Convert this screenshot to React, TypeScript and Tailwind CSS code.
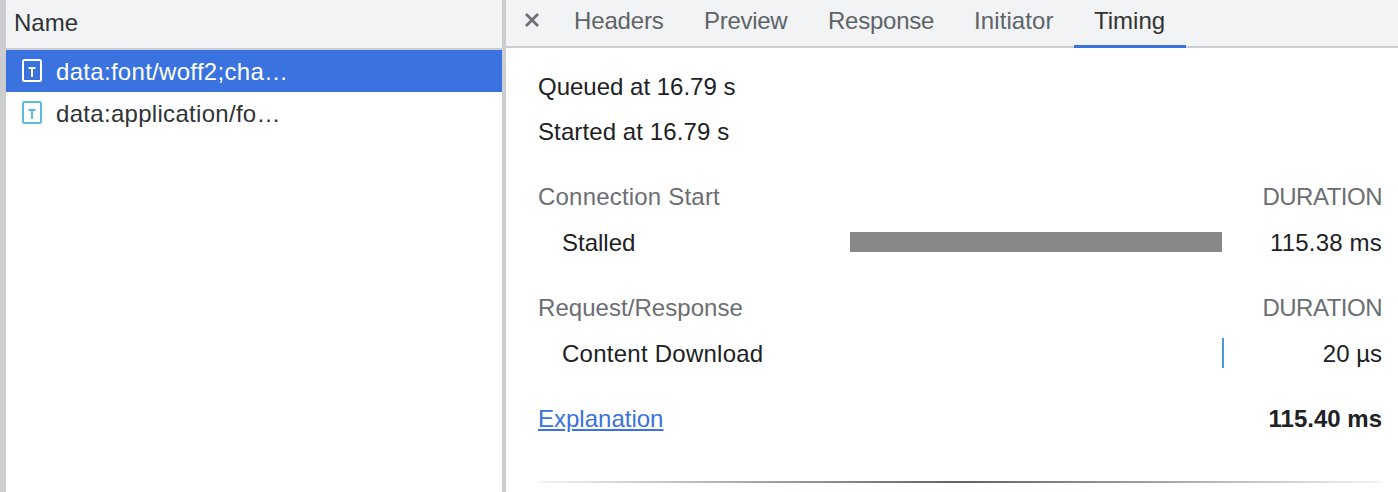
import React from "react";

function FileIcon({ selected }: { selected?: boolean }) {
  const c = selected ? "#ffffff" : "#5bbcdc";
  return (
    <svg width="22" height="24" viewBox="0 0 22 24" className="shrink-0" fill="none">
      <rect x="2" y="1" width="18" height="21" rx="1.5" stroke={c} strokeWidth="2" />
      <path d="M7.5 8h7v2h-2.5v8h-2v-8h-2.5z" fill={c} />
    </svg>
  );
}

function Tab({ label, width, tracking, active }: { label: string; width: string; tracking: string; active?: boolean }) {
  return (
    <div
      className={
        "h-[48px] pl-[20px] pb-[4px] flex items-center border-b-[3px] " +
        width +
        " " +
        tracking +
        " " +
        (active ? "border-[#3a72e0] text-[#333333]" : "border-transparent text-[#5f6368]")
      }
    >
      {label}
    </div>
  );
}

function SectionHead({ label, tracking }: { label: string; tracking: string }) {
  return (
    <div className="flex justify-between items-center h-[40px] text-[#6b6e72]">
      <span className={tracking}>{label}</span>
      <span className="tracking-[-0.5px]">DURATION</span>
    </div>
  );
}

function Row({
  label,
  value,
  tracking,
  valueTracking,
  bar,
}: {
  label: string;
  value: string;
  tracking: string;
  valueTracking: string;
  bar: React.ReactNode;
}) {
  return (
    <div className="flex items-center h-[52px] text-[#202124]">
      <div className={"w-[312px] pl-[24px] shrink-0 " + tracking}>{label}</div>
      <div className="w-[374px] shrink-0 flex items-center">{bar}</div>
      <div className={"flex-1 text-right " + valueTracking}>{value}</div>
    </div>
  );
}

export default function App() {
  return (
    <div
      className="w-[1398px] h-[492px] flex overflow-hidden bg-white text-[24px] leading-[28px]"
      style={{ fontFamily: '"Liberation Sans", Arial, sans-serif' }}
    >
      <div className="w-[6px] shrink-0 bg-[#cbcdd1]" />
      <div className="w-[496px] shrink-0 flex flex-col">
        <div className="h-[50px] shrink-0 bg-[#f1f3f4] border-b-[2px] border-[#cbcdd1] flex items-center pl-[8px] pb-[2px] text-[#303336]">
          Name
        </div>
        <div className="h-[42px] bg-[#3a72e0] flex items-center pl-[15px] gap-[13px] text-white">
          <FileIcon selected />
          <span className="pt-[2px] tracking-[0.3px]">data:font/woff2;cha…</span>
        </div>
        <div className="h-[42px] flex items-center pl-[15px] gap-[13px] text-[#303336]">
          <FileIcon />
          <span className="pt-[2px] tracking-[0.3px]">data:application/fo…</span>
        </div>
      </div>
      <div className="w-[4px] shrink-0 bg-[#cbcdd1]" />
      <div className="flex-1 flex flex-col min-w-0">
        <div className="h-[48px] shrink-0 bg-[#f1f3f4] border-b-[2px] border-[#cbcdd1] flex items-start">
          <div className="w-[48px] h-[39px] pl-[4px] flex items-center justify-center shrink-0">
            <svg width="16" height="16" viewBox="0 0 16 16" fill="none" stroke="#6e7175" strokeWidth="2.8">
              <path d="M2 2l12 12M14 2L2 14" />
            </svg>
          </div>
          <Tab label="Headers" width="w-[130px]" tracking="tracking-[-0.15px]" />
          <Tab label="Preview" width="w-[124px]" tracking="tracking-[-0.3px]" />
          <Tab label="Response" width="w-[146px]" tracking="tracking-[-0.25px]" />
          <Tab label="Initiator" width="w-[120px]" tracking="tracking-[0.1px]" />
          <Tab label="Timing" width="w-[112px]" tracking="tracking-normal" active />
        </div>
        <div className="flex-1 pl-[32px] pr-[16px] pt-[16px] flex flex-col">
          <div className="h-[45px] flex items-center text-[#202124]">Queued at 16.79 s</div>
          <div className="h-[45px] flex items-center text-[#202124] tracking-[0.1px]">Started at 16.79 s</div>
          <div className="mt-[23px]">
            <SectionHead label="Connection Start" tracking="tracking-[0.2px]" />
          </div>
          <Row
            label="Stalled"
            value="115.38 ms"
            tracking="tracking-normal"
            valueTracking="tracking-[0.2px]"
            bar={<div className="w-[372px] h-[20px] mb-[2px] bg-[#888888]" />}
          />
          <div className="mt-[19px]">
            <SectionHead label="Request/Response" tracking="tracking-[0.05px]" />
          </div>
          <Row
            label="Content Download"
            value="20 µs"
            tracking="tracking-[0.25px]"
            valueTracking="tracking-normal"
            bar={
              <div className="w-[374px] flex justify-end mb-[2px]">
                <div className="w-[2px] h-[30px] bg-[#4a98dc]" />
              </div>
            }
          />
          <div className="flex justify-between items-center h-[40px] mt-[19px]">
            <a className="text-[#3a72e0] underline">Explanation</a>
            <span className="font-bold text-[#202124]">115.40 ms</span>
          </div>
          <div
            className="h-[2px] mt-[42px] shrink-0 bg-gradient-to-r from-[#f4f4f4] via-[#5f6368] to-[#f4f4f4]"
          />
        </div>
      </div>
    </div>
  );
}
